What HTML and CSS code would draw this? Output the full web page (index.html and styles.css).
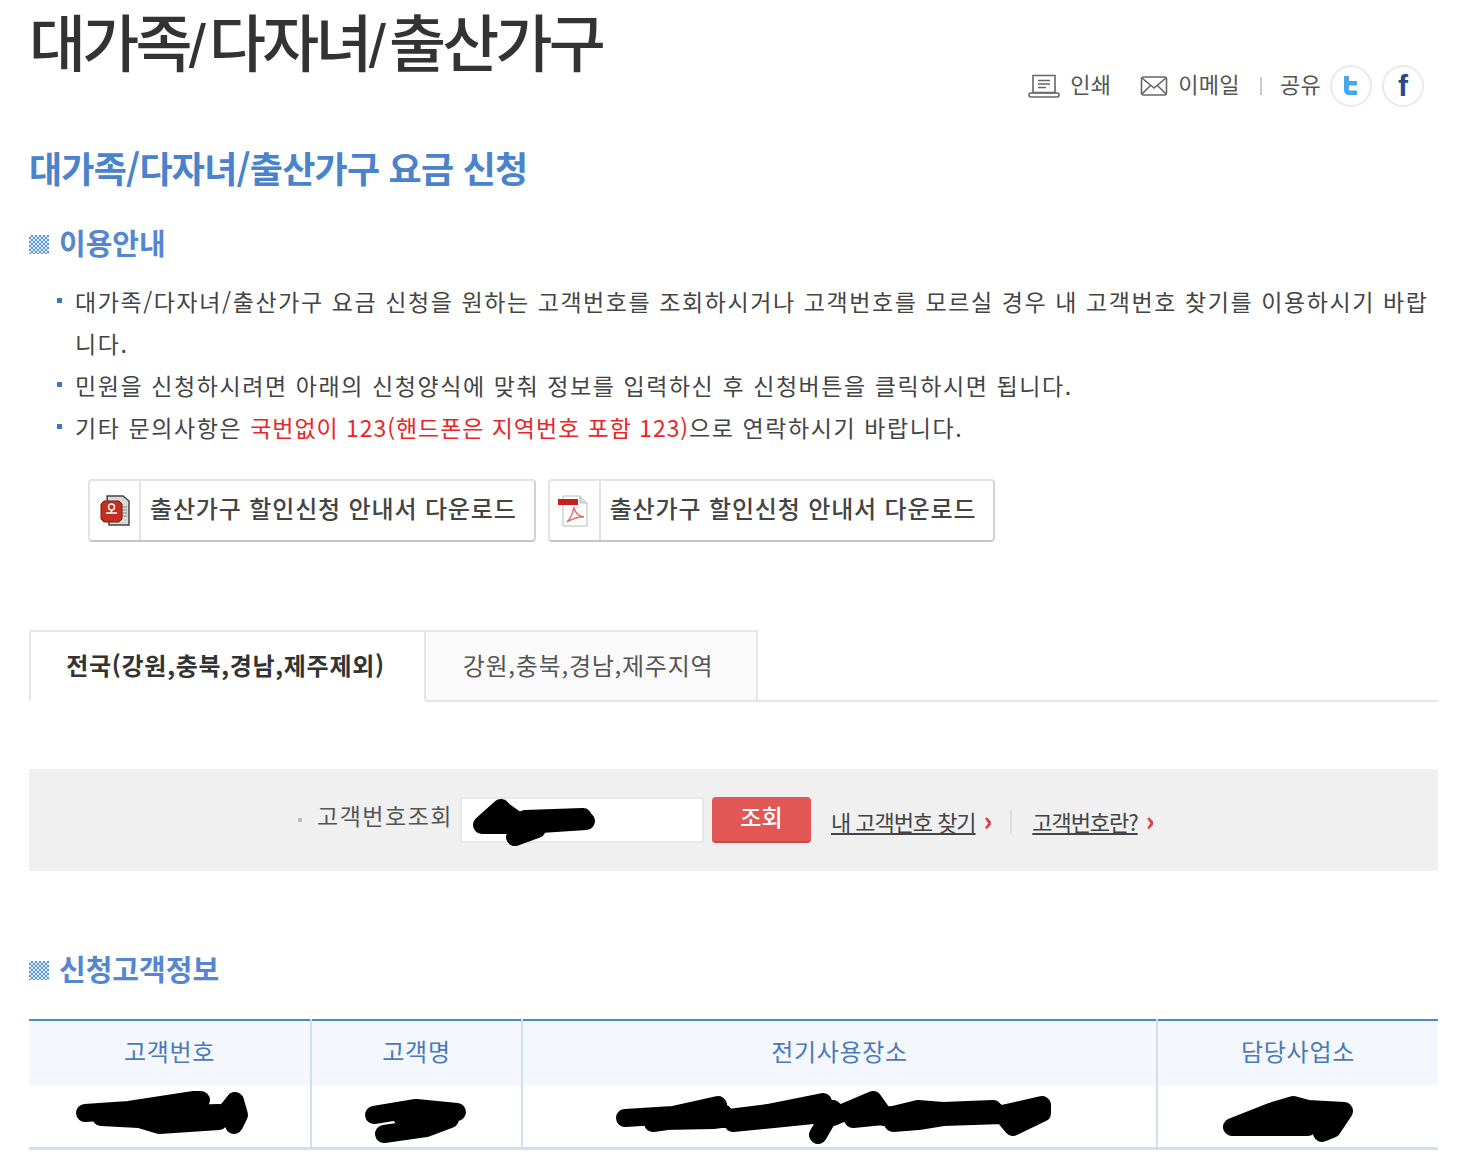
FILE: index.html
```html
<!DOCTYPE html>
<html lang="ko">
<head>
<meta charset="utf-8">
<title>대가족/다자녀/출산가구</title>
<link rel="stylesheet" href="styles.css">
</head>
<body>
<div class="page">
  <header class="top">
    <h1 class="title">대가족<span class="slash">/</span>다자녀<span class="slash">/</span>출산가구</h1>
    <div class="tools">
      <span class="tool">
        <svg class="ico" width="32" height="26" viewBox="0 0 32 26" fill="none" stroke="#666" stroke-width="1.6"><path d="M5 2.500h22v17H5z"/><path d="M10 7.500h12M10 11h12M10 14.500h8" stroke-width="1.300"/><path d="M2.500 20h27c1 0 1.500 1 1.500 2s-.5 2-1.500 2h-27c-1 0-1.500-1-1.500-2s.5-2 1.500-2z"/></svg>
        <span class="tool-txt">인쇄</span>
      </span>
      <span class="tool">
        <svg class="ico" width="28" height="22" viewBox="0 0 28 22" fill="none" stroke="#666" stroke-width="1.600"><rect x="1.500" y="2" width="25" height="18" rx="2"/><path d="M2 3l12 10L26 3M2 19l8.500-8.500M26 19l-8.500-8.500"/></svg>
        <span class="tool-txt">이메일</span>
      </span>
      <i class="sep"></i>
      <span class="tool share"><span class="tool-txt">공유</span></span>
      <span class="round">
        <svg width="18" height="22" viewBox="0 0 18 22"><path fill="#4aa8e8" d="M2 1h5v5h8v4.500H7V14c0 1 .5 1.500 1.500 1.500H15V20H7c-3 0-5-2-5-5z"/></svg>
      </span>
      <span class="round fb">f</span>
    </div>
  </header>

  <h2 class="subtitle">대가족/다자녀/출산가구 요금 신청</h2>

  <h3 class="sec sec-guide"><i class="dots"></i>이용안내</h3>
  <ul class="notes">
    <li>대가족/다자녀/출산가구 요금 신청을 원하는 고객번호를 조회하시거나 고객번호를 모르실 경우 내 고객번호 찾기를 이용하시기 바랍니다.</li>
    <li>민원을 신청하시려면 아래의 신청양식에 맞춰 정보를 입력하신 후 신청버튼을 클릭하시면 됩니다.</li>
    <li>기타 문의사항은 <em>국번없이 123(핸드폰은 지역번호 포함 123)</em>으로 연락하시기 바랍니다.</li>
  </ul>

  <div class="downloads">
    <a class="dl">
      <span class="dl-ico">
        <svg width="32" height="32" viewBox="0 0 32 32"><path d="M8 1h16l6 5v24H10z" fill="#d8d8d8" stroke="#444" stroke-width="1.500"/><path d="M22 12h6M22 15h6M22 18h6M22 21h6" stroke="#888"/><path d="M5 6h15l3 3v15l-3 3H5l-3-3V9z" fill="#c4301f" stroke="#7a1a10"/><circle cx="12.500" cy="12" r="3" fill="none" stroke="#fff" stroke-width="1.500"/><path d="M7 18h11M12.500 15v3" stroke="#fff" stroke-width="1.600"/></svg>
      </span>
      <span class="dl-txt">출산가구 할인신청 안내서 다운로드</span>
    </a>
    <a class="dl">
      <span class="dl-ico">
        <svg width="32" height="32" viewBox="0 0 32 32"><path d="M5 1h17l7 7v23H5z" fill="#fff" stroke="#bbb"/><path d="M22 1v7h7" fill="#ddd" stroke="#bbb"/><path d="M0 4h20v6H0z" fill="#c8201c"/><path d="M9 27c3-3 6-9 7-15 1 6 4 9 10 10-6 0-11 1-17 5z" fill="none" stroke="#e8706c" stroke-width="1.500"/></svg>
      </span>
      <span class="dl-txt">출산가구 할인신청 안내서 다운로드</span>
    </a>
  </div>

  <nav class="tabs">
    <a class="tab on">전국(강원,충북,경남,제주제외)</a>
    <a class="tab">강원,충북,경남,제주지역</a>
  </nav>

  <form class="lookup">
    <span class="lk-dot"></span>
    <label class="lk-label">고객번호조회</label>
    <span class="lk-input">
      <svg class="blot-in" width="130" height="52" viewBox="0 0 130 52"><path d="M17 30L36 13M17 30L60 30L121 26M60 24L118 22M50 42L72 34M36 14L50 24"/></svg>
    </span>
    <button class="lk-btn" type="button">조회</button>
    <a class="lk-link">내 고객번호 찾기</a><b class="gt">›</b>
    <i class="lk-sep"></i>
    <a class="lk-link">고객번호란?</a><b class="gt">›</b>
  </form>

  <h3 class="sec sec-info"><i class="dots"></i>신청고객정보</h3>

  <table class="info">
    <colgroup><col class="c1"><col class="c2"><col class="c3"><col class="c4"></colgroup>
    <thead>
      <tr><th>고객번호</th><th>고객명</th><th>전기사용장소</th><th>담당사업소</th></tr>
    </thead>
    <tbody>
      <tr>
        <td><svg class="blot" width="280" height="62" viewBox="0 0 280 62"><path d="M56 28L100 25L165 15L172 15M72 32L110 34L130 40L190 36L206 16M170 24L120 30L190 28M206 16L210 30L205 40"/></svg></td>
        <td><svg class="blot" width="209" height="62" viewBox="0 0 209 62"><path d="M62 30L104 23L145 27M138 34L114 43L72 49M90 32L130 36"/></svg></td>
        <td><svg class="blot" width="633" height="62" viewBox="0 0 633 62"><path d="M102 33L150 30L195 20M140 36L190 35L245 28L300 17M240 34L310 28M295 50L310 24M310 32L350 15L362 32L395 24L420 26L470 24L475 30L519 20L519 28L490 42L480 30L420 32L395 36L370 38M130 38L200 28M210 38L290 30M330 34L370 30M440 30L500 28"/></svg></td>
        <td><svg class="blot" width="281" height="62" viewBox="0 0 281 62"><path d="M74 42L112 27L135 20L150 24L186 26L174 44L164 48M74 42L150 42M110 34L170 34"/></svg></td>
      </tr>
    </tbody>
  </table>
</div>
</body>
</html>
```

FILE: styles.css
```css
* { box-sizing: border-box; }
html, body { margin: 0; padding: 0; background: #fff; }
body {
  font-family: "Noto Sans CJK KR", "Noto Sans", sans-serif;
  color: #444;
  height: 1154px;
  overflow: hidden;
}
.page { padding: 0 22px 0 29px; }
h1, h2, h3, ul { margin: 0; padding: 0; }
em { font-style: normal; color: #e8262a; letter-spacing: .95px; }

.top { display: flex; justify-content: space-between; height: 120px; }
.title {
  font-family: "Liberation Sans", "Noto Sans CJK KR", sans-serif;
  font-size: 62px;
  line-height: 91px;
  height: 91px;
  font-weight: 500;
  color: #333;
  letter-spacing: -3.8px;
}
.slash { letter-spacing: 3px; }
.tools {
  display: flex;
  align-items: center;
  height: 46px;
  margin: 63px 14px 0 0;
  font-size: 22px;
  color: #555;
}
.tool { display: flex; align-items: center; gap: 10px; margin-right: 29px; }
.tool-txt { margin-top: -6px; letter-spacing: .3px; }
.tool.share { margin: 0 9px 0 0; }
.sep { width: 2px; height: 18px; background: #ccc; margin: 0 18px 0 -9px; }
.round {
  width: 42px; height: 42px;
  border: 2px solid #eaeaea;
  border-radius: 50%;
  display: flex; align-items: center; justify-content: center;
  margin-left: 10px;
}
.tool.share + .round { margin-left: 0; }
.fb {
  font-family: "Liberation Sans", sans-serif;
  font-weight: 700;
  font-size: 30px;
  color: #2b4a8a;
}

.subtitle {
  font-size: 36px;
  line-height: 50px;
  font-weight: 700;
  color: #4a82cc;
  letter-spacing: -.75px;
  margin-top: 22px;
}

.sec {
  display: flex;
  align-items: center;
  font-size: 29px;
  line-height: 38px;
  padding-bottom: 2px;
  font-weight: 700;
  color: #5486d2;
  letter-spacing: 0;
}
.sec-guide { margin-top: 31px; }
.sec-info { margin-top: 78px; }
.dots {
  width: 20px; height: 19px;
  margin: 4px 10px 0 0;
  background: repeating-conic-gradient(#5b97dc 0 25%, #dfeafa 0 50%) 0 0 / 4px 4px;
}

.notes {
  list-style: none;
  margin: 17px 0 0 28px;
  font-size: 23px;
  line-height: 42px;
  color: #444;
}
.notes li { position: relative; padding-left: 18px; letter-spacing: 1.58px; }
.notes li::before {
  content: "";
  position: absolute;
  left: 0; top: 18px;
  width: 5px; height: 5px;
  background: #3b78c4;
}

.downloads { display: flex; gap: 12px; margin: 31px 0 0 59px; }
.dl {
  display: flex;
  align-items: center;
  height: 63px;
  border: 2px solid #e4e4e4;
  border-bottom-color: #c6c6c6;
  border-right-color: #d2d2d2;
  border-radius: 4px;
  background: #fff;
}
.dl-ico {
  width: 51px;
  height: 100%;
  border-right: 2px solid #e4e4e4;
  display: flex; align-items: center; justify-content: center;
}
.dl-txt { padding: 0 17px 6px 9px; font-size: 24px; font-weight: 500; color: #444; letter-spacing: .85px; white-space: nowrap; }

.tabs {
  display: flex;
  margin-top: 88px;
  height: 72px;
  border-bottom: 2px solid #e6e6e6;
}
.tab {
  height: 72px;
  display: flex;
  align-items: center;
  justify-content: center;
  padding: 0 6px 3px 0;
  font-size: 24px;
  color: #555;
  background: #fafafa;
  border: 2px solid #e6e6e6;
  border-left: 0;
  width: 332px;
  letter-spacing: .75px;
}
.tab.on {
  width: 397px;
  padding-right: 4px;
  background: #fff;
  border-left: 2px solid #e6e6e6;
  border-bottom-color: #fff;
  border-right-color: #e6e6e6;
  font-weight: 700;
  color: #333;
  letter-spacing: .7px;
}

.lookup {
  display: flex;
  align-items: center;
  height: 102px;
  margin-top: 67px;
  padding-left: 269px;
  background: #f0f0f0;
  font-size: 23px;
  color: #555;
}
.lk-dot { width: 4px; height: 4px; background: #bbb; margin: 0 15px 0 0; }
.lk-label { letter-spacing: 1.500px; margin: -10px 7px 0 0; }
.lk-input {
  position: relative;
  width: 244px; height: 46px;
  background: #fff;
  border: 2px solid #e8e8e8;
  margin: 0 8px 0 0;
}
.blot-in { position: absolute; left: 3px; top: -4px; overflow: visible; }
.blot-in path, .blot path {
  fill: none;
  stroke: #000;
  stroke-width: 18;
  stroke-linecap: round;
  stroke-linejoin: round;
}
.blot { display: block; }
.lk-btn {
  width: 99px; height: 46px;
  border: 0;
  border-bottom: 2px solid #c84a48;
  border-radius: 4px;
  background: #e05756;
  color: #fff;
  font: 500 23px "Noto Sans CJK KR", sans-serif;
  padding: 0 0 6px;
  margin: 0 20px 0 0;
}
.lk-link { text-decoration: underline; color: #444; font-size: 22px; letter-spacing: -1.05px; margin-top: 2px; }
.gt { color: #d9423c; font-size: 26px; font-weight: 900; margin: 0 0 0 8px; line-height: 1; }
.lk-sep { width: 2px; height: 24px; background: #ddd; margin: 4px 20px 0 18px; }

.info {
  width: 100%;
  table-layout: fixed;
  border-collapse: collapse;
  margin-top: 30px;
  border-top: 2px solid #4f86d0;
  border-bottom: 3px solid #cfe0f2;
  font-size: 24px;
}
.c1 { width: 282px; }
.c2 { width: 211px; }
.c3 { width: 635px; }
.c4 { width: 281px; }
.info th {
  height: 65px;
  background: #f4f8fe;
  font-weight: 400;
  color: #4a7ab8;
  padding: 0 0 6px;
  letter-spacing: .7px;
}
.info td { height: 61px; padding: 0; }
.info th, .info td { border-right: 2px solid #cfe0f2; }
.info th:last-child, .info td:last-child { border-right: 0; }
```
